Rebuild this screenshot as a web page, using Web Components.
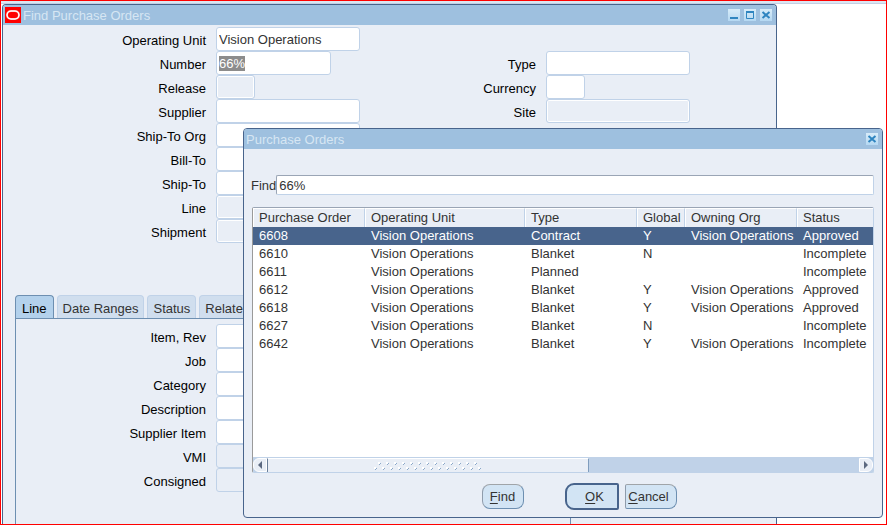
<!DOCTYPE html>
<html lang="en">

<head>
    <meta charset="UTF-8">
    <meta name="viewport" content="width=device-width, initial-scale=1.0">
    <title>Find Purchase Orders</title>
    <style type="text/css">
        html {
            height: 100%;
        }

        body {
            --canvas: #e9eef6;
            --line: #c0d2e8;
            --frame: #48648c;
            --bar: #9ec0df;
            box-sizing: border-box;
            position: relative;
            display: flex;
            flex-direction: column;
            height: 100%;
            margin: 0;
            overflow: hidden;
            border: 1px solid #f00;
            background: #fff;
            color: #000;
            font: 13px/18px "Liberation Sans", Arial, sans-serif;
        }

        .strip {
            flex: none;
            height: 2px;
            background: #dbe6f2;
            border-bottom: 1px solid #c3d0e4;
        }

        .main {
            flex: 1 0 auto;
            margin: 0 109px 0 1px;
            border-bottom: 0;
            border-radius: 4px 4px 0 0;
        }

        .columns {
            display: flex;
            padding-top: 2px;
        }

        .columns > .left {
            flex: 0 0 360px;
            --label: 203px;
        }

        .columns > .right {
            --label: 173px;
            padding-top: 24px;
        }

        po-tabs {
            margin: 52px 205px 0 12px;
            --label: 190px;
        }

        /* floats over the form */
        .lov {
            position: absolute;
            top: 127px;
            left: 242px;
            right: 3px;
            color: #333;
            border-radius: 4px;
        }

        .lov po-find {
            margin: 26px 8px 12px 7px;
        }

        .lov po-list {
            margin: 0 8px;
        }

        .buttons {
            display: flex;
            align-items: center;
            justify-content: center;
            padding: 10px 0 7px 32px;
        }

        .buttons .find {
            margin-right: 41px;
        }

        .buttons .ok {
            margin-right: 6px;
        }
    </style>
</head>

<body>
    <div class="strip"></div>

    <po-window class="main" caption="Find Purchase Orders" logo controls="min max close">
        <div class="columns">
            <div class="left">
                <po-field label="Operating Unit" value="Vision Operations" size="l"></po-field>
                <po-field label="Number" value="66%" size="m" selected></po-field>
                <po-field label="Release" size="s" disabled></po-field>
                <po-field label="Supplier" size="l"></po-field>
                <po-field label="Ship-To Org" size="l"></po-field>
                <po-field label="Bill-To" size="l"></po-field>
                <po-field label="Ship-To" size="l"></po-field>
                <po-field label="Line" size="s" disabled></po-field>
                <po-field label="Shipment" size="s" disabled></po-field>
            </div>
            <div class="right">
                <po-field label="Type" size="l"></po-field>
                <po-field label="Currency" size="s"></po-field>
                <po-field label="Site" size="l" disabled></po-field>
            </div>
        </div>

        <po-tabs tabs="Line,Date Ranges,Status,Related">
            <po-field label="Item, Rev" size="l"></po-field>
            <po-field label="Job" size="l"></po-field>
            <po-field label="Category" size="l"></po-field>
            <po-field label="Description" size="l"></po-field>
            <po-field label="Supplier Item" size="l"></po-field>
            <po-field label="VMI" size="s" disabled flat></po-field>
            <po-field label="Consigned" size="s" disabled flat></po-field>
        </po-tabs>
    </po-window>

    <po-window class="lov" caption="Purchase Orders" controls="close">
        <po-find label="Find" value="66%"></po-find>
        <po-list></po-list>
        <div class="buttons">
            <po-button class="find"><u>F</u>ind</po-button>
            <po-button class="ok" kind="default"><u>O</u>K</po-button>
            <po-button kind="last"><u>C</u>ancel</po-button>
        </div>
    </po-window>

    <script type="text/javascript">
        // Base class: every element renders one template into an open shadow root
        class PoElement extends HTMLElement {
            constructor() {
                super();
                this.attachShadow({ mode: "open" });
            }

            connectedCallback() {
                this.shadowRoot.innerHTML = this.render();
            }
        }

        const ICONS = {
            min: `<path d="M2 9h8" stroke-width="2"/>`,
            max: `<path d="M2.5 3.5h7v6h-7z"/><path d="M2 3h8" stroke-width="2"/>`,
            close: `<path d="M2.5 3l7 6M9.5 3l-7 6" stroke-width="2"/>`
        };
        const NAMES = { min: "Minimize", max: "Maximize", close: "Close" };

        // Window frame with a title bar
        class PoWindow extends PoElement {
            render() {
                const controls = this.getAttribute("controls").split(" ");
                return `
                    <style>
                        :host {
                            display: flex;
                            flex-direction: column;
                            overflow: hidden;
                            border: 1px solid var(--frame);
                            background: var(--canvas);
                        }

                        header {
                            display: flex;
                            align-items: center;
                            gap: 4px;
                            height: 20px;
                            padding: 0 4px 0 2px;
                            background: var(--bar);
                            color: #d6e6f3;
                        }

                        .caption {
                            flex: 1;
                            padding-top: 2px;
                        }

                        button {
                            width: 12px;
                            height: 12px;
                            padding: 0;
                            border: 0;
                            background: linear-gradient(#d8ecf9, #b5d8f2);
                        }

                        svg {
                            display: block;
                            fill: none;
                            stroke: #2f85c0;
                        }

                        .logo {
                            margin-right: -2px;
                        }
                    </style>
                    <header>
                        ${this.hasAttribute("logo") ? `
                        <svg class="logo" width="16" height="16" viewBox="0 0 16 16">
                            <rect width="16" height="16" fill="#f00" stroke="none"/>
                            <rect x="2" y="4" width="12" height="8" rx="4" stroke="#ffb0b0" stroke-width="2"/>
                            <rect x="2" y="4" width="12" height="8" rx="4" stroke="#fff"/>
                        </svg>` : ""}
                        <span class="caption">${this.getAttribute("caption")}</span>
                        ${controls.map((c) => `
                        <button type="button" aria-label="${NAMES[c]}">
                            <svg width="12" height="12" viewBox="0 0 12 12">${ICONS[c]}</svg>
                        </button>`).join("")}
                    </header>
                    <slot></slot>
                `;
            }
        }

        // Right aligned prompt and its text box
        class PoField extends PoElement {
            render() {
                return `
                    <style>
                        :host {
                            display: flex;
                            align-items: center;
                            gap: 10px;
                            height: 24px;
                        }

                        label {
                            flex: 0 0 var(--label);
                            padding-top: 4px;
                            text-align: right;
                            white-space: nowrap;
                        }

                        input {
                            box-sizing: border-box;
                            width: 144px;
                            height: 24px;
                            padding: 0 2px;
                            border: 1px solid var(--line);
                            border-radius: 3px;
                            outline: 0;
                            background: #fff;
                            color: #333;
                            font: inherit;
                        }

                        :host([size="m"]) input { width: 115px; }
                        :host([size="s"]) input { width: 39px; }

                        input:disabled {
                            background: var(--canvas);
                            box-shadow: inset 0 0 0 1px #fff;
                        }

                        :host([flat]) input { box-shadow: none; }

                        input::selection {
                            background: #8c8c8c;
                            color: #fff;
                        }
                    </style>
                    <label for="box">${this.getAttribute("label")}</label>
                    <input id="box" type="text" value="${this.getAttribute("value") || ""}"
                        ${this.hasAttribute("disabled") ? "disabled" : ""}>
                `;
            }

            connectedCallback() {
                super.connectedCallback();
                if (this.hasAttribute("selected")) {
                    const box = this.shadowRoot.querySelector("input");
                    box.focus();
                    box.select();
                }
            }
        }

        // Tab strip and the panel below it
        class PoTabs extends PoElement {
            render() {
                const tabs = this.getAttribute("tabs").split(",");
                return `
                    <style>
                        :host {
                            flex: 1;
                            display: flex;
                            flex-direction: column;
                        }

                        nav {
                            display: flex;
                            gap: 3px;
                        }

                        button {
                            height: 23px;
                            padding: 3px 5px 0;
                            border: 1px solid var(--line);
                            border-bottom: 0;
                            border-radius: 4px 4px 0 0;
                            background: #d0deee;
                            color: #333;
                            font: inherit;
                            white-space: nowrap;
                        }

                        button[aria-selected="true"] {
                            height: 24px;
                            padding: 3px 6px 0;
                            margin-bottom: -1px;
                            border-color: #6d8fb1;
                            background: #b3d1ec;
                            color: #000;
                        }

                        .panel {
                            flex: 1;
                            padding: 5px 0 31px;
                            border: 1px solid #6d8fb1;
                            border-bottom: 0;
                        }
                    </style>
                    <nav role="tablist">
                        ${tabs.map((t, i) => `<button type="button" role="tab" aria-selected="${i === 0}">${t}</button>`).join("")}
                    </nav>
                    <div class="panel" role="tabpanel"><slot></slot></div>
                `;
            }
        }

        // Search box of the list of values
        class PoFind extends PoElement {
            render() {
                return `
                    <style>
                        :host {
                            display: flex;
                            align-items: center;
                        }

                        label {
                            flex: 0 0 24px;
                            padding-top: 2px;
                        }

                        input {
                            box-sizing: border-box;
                            flex: 1;
                            min-width: 0;
                            height: 20px;
                            padding: 1px 2px 0;
                            border: 1px solid var(--line);
                            border-top-color: #9aa5b5;
                            border-left-color: #9aa5b5;
                            border-radius: 2px;
                            background: #fff;
                            color: #333;
                            font: inherit;
                        }
                    </style>
                    <label for="box">${this.getAttribute("label")}</label>
                    <input id="box" type="text" value="${this.getAttribute("value")}">
                `;
            }
        }

        const COLUMNS = ["Purchase Order", "Operating Unit", "Type", "Global", "Owning Org", "Status"];
        const ROWS = [
            ["6608", "Vision Operations", "Contract", "Y", "Vision Operations", "Approved"],
            ["6610", "Vision Operations", "Blanket", "N", "", "Incomplete"],
            ["6611", "Vision Operations", "Planned", "", "", "Incomplete"],
            ["6612", "Vision Operations", "Blanket", "Y", "Vision Operations", "Approved"],
            ["6618", "Vision Operations", "Blanket", "Y", "Vision Operations", "Approved"],
            ["6627", "Vision Operations", "Blanket", "N", "", "Incomplete"],
            ["6642", "Vision Operations", "Blanket", "Y", "Vision Operations", "Incomplete"]
        ];

        // Result table with its horizontal scroll bar
        class PoList extends PoElement {
            render() {
                return `
                    <style>
                        :host {
                            display: block;
                            border: 1px solid var(--line);
                            border-top-color: #9aa5b5;
                            border-left-color: #9a9a9a;
                            border-radius: 2px;
                            background: #fff;
                        }

                        .rows {
                            min-height: 249px;
                        }

                        table {
                            width: 100%;
                            table-layout: fixed;
                            border-collapse: separate;
                            border-spacing: 0;
                        }

                        th, td {
                            height: 18px;
                            padding: 0 0 0 6px;
                            text-align: left;
                            white-space: nowrap;
                            font-weight: normal;
                        }

                        th {
                            padding-left: 5px;
                            box-sizing: border-box;
                            border-left: 1px solid #fff;
                            border-right: 1px solid var(--line);
                            border-top: 1px solid #fff;
                            background: var(--canvas);
                        }

                        th:last-child { border-right: 0; }

                        .current {
                            background: var(--frame);
                            color: #fff;
                        }

                        .wide { width: 160px; }
                        .medium { width: 112px; }
                        .narrow { width: 48px; }

                        .scroll {
                            display: flex;
                            height: 14px;
                            border-top: 1px solid var(--line);
                            background: var(--line);
                        }

                        button {
                            display: grid;
                            place-items: center;
                            width: 14px;
                            padding: 0;
                            border: 1px solid #fff;
                            background: var(--canvas);
                        }

                        .prev { border-radius: 6px 0 0 6px; }
                        .next { border-radius: 0 6px 6px 0; margin-left: auto; }

                        .thumb {
                            box-sizing: border-box;
                            width: 52%;
                            border-left: 1px solid #6b7f99;
                            border-right: 1px solid #7f9cbd;
                            border-top: 1px solid #fff;
                            background: var(--canvas);
                            display: grid;
                            place-items: center;
                        }
                    </style>
                    <div class="rows">
                        <table>
                            <colgroup>
                                <col class="medium"><col class="wide"><col class="medium">
                                <col class="narrow"><col class="medium"><col>
                            </colgroup>
                            <thead><tr>${COLUMNS.map((c) => `<th>${c}</th>`).join("")}</tr></thead>
                            <tbody>
                                ${ROWS.map((r, i) => `<tr class="${i === 0 ? "current" : ""}">${r.map((c) => `<td>${c}</td>`).join("")}</tr>`).join("")}
                            </tbody>
                        </table>
                    </div>
                    <div class="scroll">
                        <button class="prev" type="button" aria-label="Scroll left">
                            <svg width="4" height="8" viewBox="0 0 4 8"><path d="M4 0v8L0 4z" fill="#5b6880"/></svg>
                        </button>
                        <div class="thumb">
                            <svg width="108" height="8" viewBox="0 0 108 8">
                                <defs>
                                    <pattern id="grip" width="8" height="8" patternUnits="userSpaceOnUse">
                                        <path d="M0 5h2v2H0zM4 0h2v2H4z" fill="#fff"/>
                                        <path d="M1 8l2-2M5 3l2-2" stroke="#8ba8c9"/>
                                    </pattern>
                                </defs>
                                <rect width="108" height="8" fill="url(#grip)"/>
                            </svg>
                        </div>
                        <button class="next" type="button" aria-label="Scroll right">
                            <svg width="4" height="8" viewBox="0 0 4 8"><path d="M0 0v8l4-4z" fill="#5b6880"/></svg>
                        </button>
                    </div>
                `;
            }
        }

        // Push button, kind sets which corners are rounded
        class PoButton extends PoElement {
            render() {
                return `
                    <style>
                        :host { display: block; }

                        button {
                            box-sizing: border-box;
                            width: 42px;
                            height: 25px;
                            padding: 0;
                            border: 1px solid #6d8fb1;
                            border-top-color: #a0a4a8;
                            border-left-color: #8f9cab;
                            border-radius: 8px;
                            background: #d2e4f4;
                            color: #333;
                            font: inherit;
                        }

                        :host([kind="default"]) button {
                            width: 54px;
                            height: 27px;
                            padding-left: 6px;
                            border: 2px solid var(--frame);
                            border-radius: 9px 2px 2px 9px;
                        }

                        :host([kind="last"]) button {
                            width: 52px;
                            padding-right: 4px;
                            border-radius: 2px 8px 8px 2px;
                        }

                        ::slotted(u) { text-underline-offset: 2px; }
                    </style>
                    <button type="button"><slot></slot></button>
                `;
            }
        }

        // Register the elements
        customElements.define("po-window", PoWindow);
        customElements.define("po-field", PoField);
        customElements.define("po-tabs", PoTabs);
        customElements.define("po-find", PoFind);
        customElements.define("po-list", PoList);
        customElements.define("po-button", PoButton);
    </script>

</body>

</html>
